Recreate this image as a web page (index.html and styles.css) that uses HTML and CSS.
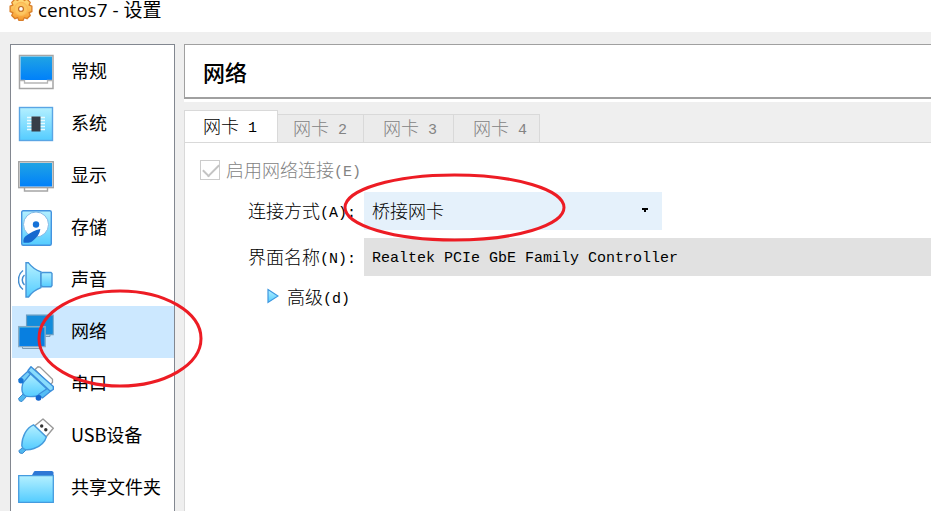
FILE: index.html
```html
<!DOCTYPE html>
<html lang="zh-CN">
<head>
<meta charset="utf-8">
<title>centos7 - 设置</title>
<link rel="stylesheet" href="styles.css">
</head>
<body>
  <header class="titlebar">
    <svg class="gear" viewBox="1 3.300 22 19.300" width="24" height="21">
      <defs>
        <linearGradient id="orange" x1="0" y1="0" x2="0" y2="1">
          <stop offset="0" stop-color="#ffe080"/>
          <stop offset="1" stop-color="#f79a2c"/>
        </linearGradient>
        <linearGradient id="screen" x1="0" y1="0" x2="0" y2="1">
          <stop offset="0" stop-color="#20a4e4"/>
          <stop offset="1" stop-color="#0080fa"/>
        </linearGradient>
        <linearGradient id="ice" x1="0" y1="0" x2="0" y2="1">
          <stop offset="0" stop-color="#b4f0ff"/>
          <stop offset="1" stop-color="#54ccff"/>
        </linearGradient>
      </defs>
      <path d="M10 1.500h4l1 2.300 2.500-1.300 3 3-1 2.500 2.500 1v5l-2.500 1 1 2.500-3 3-2.500-1-1 2.500h-4l-1-2.500-2.500 1-3-3 1-2.500-2.500-1V9l2.500-1-1-2.500 3-3L9 3.800z" fill="url(#orange)" stroke="#d97d28" stroke-width="1.200" stroke-linejoin="round"/>
      <circle cx="12" cy="11.500" r="6" fill="#fdc660" stroke="#fbb956"/>
      <circle cx="12" cy="11.500" r="2.200" fill="#fff" stroke="#bd651e" stroke-width="1"/>
    </svg>
    <span class="title">centos7 - 设置</span>
  </header>

  <div class="window">
    <nav class="sidebar">
      <a class="item" href="#general">
        <svg viewBox="0 0 36 36">
          <rect x="1.500" y="1.500" width="33.500" height="33" fill="#fff" stroke="#a5a5a5" stroke-width="1.500"/>
          <rect x="2.500" y="2.500" width="31.500" height="23.500" fill="url(#screen)"/>
          <path d="M2 26.500h4.500V29h23v-2.500H34" fill="none" stroke="#b5b5b5" stroke-width="1.300"/>
        </svg>
        <span>常规</span>
      </a>
      <a class="item" href="#system">
        <svg viewBox="0 0 36 36">
          <rect x="1.500" y="1.500" width="33" height="33" fill="url(#ice)" stroke="#5aa5e4" stroke-width="1.400"/>
          <path d="M9 11.500h18M9 14.500h18M9 17.500h18M9 20.500h18M9 23.500h18" stroke="#e8fbff" stroke-width="1.500"/>
          <rect x="13.500" y="10.500" width="9" height="15" fill="#383e48"/>
        </svg>
        <span>系统</span>
      </a>
      <a class="item" href="#display">
        <svg viewBox="0 0 36 36">
          <path d="M6.500 29v4h23v-4" fill="#fff" stroke="#a5a5a5" stroke-width="1.400"/>
          <rect x=".7" y="3.700" width="34.600" height="26" fill="#ddd" stroke="#a0a0a0" stroke-width="1.300"/>
          <rect x="2" y="5" width="32" height="23.500" fill="url(#screen)"/>
        </svg>
        <span>显示</span>
      </a>
      <a class="item" href="#storage">
        <svg viewBox="0 0 36 36">
          <rect x="3.700" y=".7" width="29.600" height="34.600" rx="1.500" fill="url(#ice)" stroke="#4493df" stroke-width="1.400"/>
          <circle cx="18" cy="14.500" r="12.500" fill="#fff" stroke="#83b9e6"/>
          <circle cx="18" cy="14.500" r="3.200" fill="#1672d8"/>
          <path d="M22.300 19c-.5 5-3.300 8.500-8.300 12.500-1.500 1.300-5 1.300-8.500 1.300-.6-3 .4-5.500 2.300-6.800C13 22.500 17 20 22.300 19z" fill="#1769cf"/>
        </svg>
        <span>存储</span>
      </a>
      <a class="item" href="#audio">
        <svg viewBox="0 0 36 36">
          <path d="M5 8.500C-1 13-1 23 5 27.500M6.500 13c-3 2.500-3 7.500 0 10" fill="none" stroke="#438dcf" stroke-width="1.500"/>
          <path d="M8 .8h2.500c3 4 7 7 12.500 9v15.800c-5.500 2-9.500 5-12.500 9.400H8z" fill="url(#ice)" stroke="#4595d9" stroke-width="1.400"/>
          <path d="M23 11.500l1.500-1h8.500l1 1v12l-1 1.200h-8.500l-1.500-1z" fill="url(#ice)" stroke="#4595d9" stroke-width="1.400"/>
        </svg>
        <span>声音</span>
      </a>
      <a class="item selected" href="#network">
        <svg viewBox="0 0 36 36">
          <path d="M26 20v2.500h6V20" fill="#cfe2f2" stroke="#7b9bb4"/>
          <rect x="8.600" y="1.100" width="26.500" height="19.500" fill="#1487d4" stroke="#6b9fc4" stroke-width="1.300"/>
          <rect x="9.500" y="2" width="25" height="17.500" fill="#138cdb"/>
          <path d="M4.500 32v2.500h19V32" fill="#cfe2f2" stroke="#7b9bb4"/>
          <rect x=".7" y="12.600" width="26.500" height="20" fill="url(#screen)" stroke="#87aac3" stroke-width="1.300"/>
          <rect x="2" y="14" width="24" height="17.500" fill="#087fe0"/>
        </svg>
        <span>网络</span>
      </a>
      <a class="item" href="#serial">
        <svg viewBox="0 0 36 36">
          <path d="M17 3.500L20 .8l2 .3 12.500 12.200v3.200l-2.800 2.500z" fill="#fff" stroke="#999" stroke-width="1.300"/>
          <path d="M5.500 27.500l3 3-4.500 5-2.500-.5-1-2.500z" fill="#4fb7ef" stroke="#3b89cf"/>
          <path d="M11 6.500L29.500 23.500 24.500 28.500c-3 1.500-6 2-9 2-4 .3-7 .3-9-1C4.300 27.500 3.700 25 4 21.500c.3-3 .8-5 2-7.500z" fill="url(#ice)" stroke="#3f96dd" stroke-width="1.400"/>
          <path d="M9.500 5.500l3 2.500-7.500 9L1 13.500z" fill="#74cef8" stroke="#3b8edb" stroke-width="1.200"/>
          <path d="M30 22l3.500 2.500-9 7.500-4-3.500z" fill="#54bdf5" stroke="#3b8edb" stroke-width="1.200"/>
          <circle cx="3" cy="14.700" r="2.700" fill="#1674d4"/>
          <circle cx="20.500" cy="31.800" r="2.900" fill="#1265cf"/>
          <path d="M10 4.500L13 .7 35.300 20.500v3l-3 1.700z" fill="#89dcfc" stroke="#3b8edb" stroke-width="1.400" stroke-linejoin="round"/>
        </svg>
        <span>串口</span>
      </a>
      <a class="item" href="#usb">
        <svg viewBox="0 0 36 36">
          <path d="M16.500 8l8.500-7 10.300 9.200L28 19z" fill="#fff" stroke="#999" stroke-width="1.400" stroke-linejoin="round"/>
          <circle cx="23.700" cy="8" r="1.700" fill="#333"/>
          <circle cx="27.800" cy="11.700" r="1.700" fill="#333"/>
          <path d="M5.500 29l3 2.500-4 4-2.700-.5-1-2.300z" fill="#4fb7ef" stroke="#3b89cf"/>
          <path d="M15.500 6.800L28.300 19c-1.500 5.500-6.500 9.500-12.300 11.500-3 1-6 1.500-8.500 1.200C5.500 31 4 29.500 3.800 27.500 4 18 8.500 10 15.500 6.800z" fill="url(#ice)" stroke="#459bdd" stroke-width="1.400"/>
        </svg>
        <span>USB设备</span>
      </a>
      <a class="item" href="#shared">
        <svg viewBox="0 0 36 36">
          <path d="M13.500 6L16 1.500l1-.5h17l1.500 1V6z" fill="#2e78d5"/>
          <path d="M.7 5.700h34.600v26.600H.7z" fill="url(#ice)" stroke="#459bdf" stroke-width="1.300"/>
        </svg>
        <span>共享文件夹</span>
      </a>
    </nav>

    <main class="content">
      <h1 class="heading">网络</h1>
      <div class="tabs" role="tablist">
        <button class="tab active" role="tab" aria-selected="true">网卡<span class="latin"> 1</span></button>
        <button class="tab" role="tab">网卡<span class="latin"> 2</span></button>
        <button class="tab" role="tab">网卡<span class="latin"> 3</span></button>
        <button class="tab" role="tab">网卡<span class="latin"> 4</span></button>
      </div>
      <div class="panel" role="tabpanel">
        <div class="enable">
          <input type="checkbox" id="enable" checked disabled>
          <label for="enable">启用网络连接<span class="latin">(E)</span></label>
        </div>
        <div class="form">
          <label for="attached">连接方式<span class="latin">(A):</span></label>
          <div class="combo">
            <select id="attached">
              <option>桥接网卡</option>
            </select>
            <svg class="caret" viewBox="0 0 6 4"><path d="M0 0h6v2H4v2H2V2H0z"/></svg>
          </div>
          <label for="adapter">界面名称<span class="latin">(N):</span></label>
          <select id="adapter" class="adapter">
            <option>Realtek PCIe GbE Family Controller</option>
          </select>
        </div>
        <button class="advanced">
          <svg viewBox="0 0 12 16"><path d="M1 1.500L11 8 1 14.500z" fill="url(#ice)" stroke="#3f98e0" stroke-width="1.200"/></svg>
          <span>高级<span class="latin">(d)</span></span>
        </button>
      </div>
    </main>
  </div>

  <!-- hand-drawn marks over the dialog -->
  <svg class="marks" width="600" height="400">
    <ellipse cx="120" cy="338.500" rx="81" ry="47.500"/>
    <ellipse cx="454.500" cy="207.500" rx="109.500" ry="32.500"/>
  </svg>
</body>
</html>
```
FILE: styles.css
```css
* {
  box-sizing: border-box;
}

body {
  margin: 0;
  height: 100vh;
  display: flex;
  flex-direction: column;
  overflow: hidden;
  background: #efefef;
  color: #000;
  font-family: "Noto Sans CJK SC", sans-serif;
  font-size: 18px;
  line-height: 24px;
}

button, select {
  font: inherit;
  color: inherit;
  border: none;
  border-radius: 0;
}

.titlebar {
  flex: none;
  display: flex;
  height: 32px;
  padding-left: 9px;
  background: #fff;
  line-height: 20px;
}

.title {
  margin-left: 5px;
  font-family: "Open Sans", "Noto Sans CJK SC", sans-serif;
  font-size: 19px;
}

.window {
  flex: 1;
  display: flex;
  gap: 9px;
  min-height: 0;
  padding: 12px 0 0 10px;
}

.sidebar {
  flex: none;
  width: 165px;
  padding: 1px 0 0 1px;
  overflow: hidden;
  background: #fff;
  border: 1px solid #828790;
  border-bottom: none;
}

.item {
  display: flex;
  align-items: center;
  gap: 17px;
  height: 52px;
  padding-left: 6px;
  color: #000;
  text-decoration: none;
  white-space: nowrap;
}

.item svg {
  flex: none;
  width: 36px;
  height: 36px;
}

.item span {
  padding-bottom: 4px;
}

.selected {
  background: #cce8ff;
}

.content {
  flex: 1;
  min-width: 0;
  display: flex;
  flex-direction: column;
}

.heading {
  margin: 0;
  padding: 14px 18px;
  background: #fff;
  border: 1px solid #a0a0a0;
  border-width: 1px 0 2px 1px;
  box-shadow: 0 3px #fff;
  font-size: 22px;
  font-weight: 500;
}

.tabs {
  display: flex;
  align-items: flex-end;
  margin-top: 11px;
}

.tab {
  height: 28px;
  padding: 0 16px 4px 15px;
  background: #ebebeb;
  border: 1px solid #d9d9d9;
  border-width: 1px 1px 0 0;
  color: #838383;
  font-weight: 300;
}

.tab + .tab + .tab {
  padding-left: 19px;
}

.tabs .tab:last-child {
  padding-right: 12px;
}

.tab.active {
  height: 33px;
  padding: 0 20px 4px 18px;
  margin-bottom: -1px;
  background: #fff;
  border-left-width: 1px;
  color: #000;
}

.latin {
  font-family: "Liberation Mono", monospace;
  font-size: 15px;
  line-height: 1;
  vertical-align: 1px;
  white-space: pre;
}

.panel {
  flex: 1;
  padding: 15px 0 0 15px;
  background: #fff;
  border: 1px solid #d9d9d9;
  border-width: 1px 0 0 1px;
  font-weight: 300;
}

.panel label {
  padding-bottom: 3px;
}

.enable {
  display: flex;
  align-items: center;
  gap: 6px;
  height: 24px;
  color: #838383;
}

.enable input {
  appearance: none;
  width: 20px;
  height: 20px;
  margin: 0;
  border: 1px solid #ccc;
}

.enable input:checked::before {
  content: "";
  display: block;
  width: 14px;
  height: 7px;
  margin: 4px 0 0 2px;
  border: solid #c4c4c4;
  border-width: 0 0 2px 2px;
  transform: translateY(-1px) rotate(-45deg);
}

.form {
  display: grid;
  grid-template-columns: 108px 1fr;
  column-gap: 8px;
  row-gap: 8px;
  align-items: center;
  margin: 10px 0 0 48px;
}

.form select {
  appearance: none;
  height: 38px;
  padding: 0 8px 2px;
}

.combo {
  position: relative;
  width: 298px;
}

.combo select {
  width: 100%;
  background: #e5f1fb;
}

.caret {
  position: absolute;
  right: 14px;
  top: 16px;
  width: 6px;
  height: 4px;
}

.form .adapter {
  width: 100%;
  padding: 4px 8px 0;
  background: #e1e1e1;
  font-family: "Liberation Mono", monospace;
  font-size: 15px;
}

.advanced {
  display: flex;
  align-items: center;
  gap: 8px;
  margin: 8px 0 0 67px;
  padding: 0;
  background: none;
}

.advanced svg {
  width: 12px;
  height: 16px;
}

.marks {
  position: absolute;
  left: 0;
  top: 0;
  pointer-events: none;
  fill: none;
  stroke: #ed1c24;
  stroke-width: 3;
}
```
